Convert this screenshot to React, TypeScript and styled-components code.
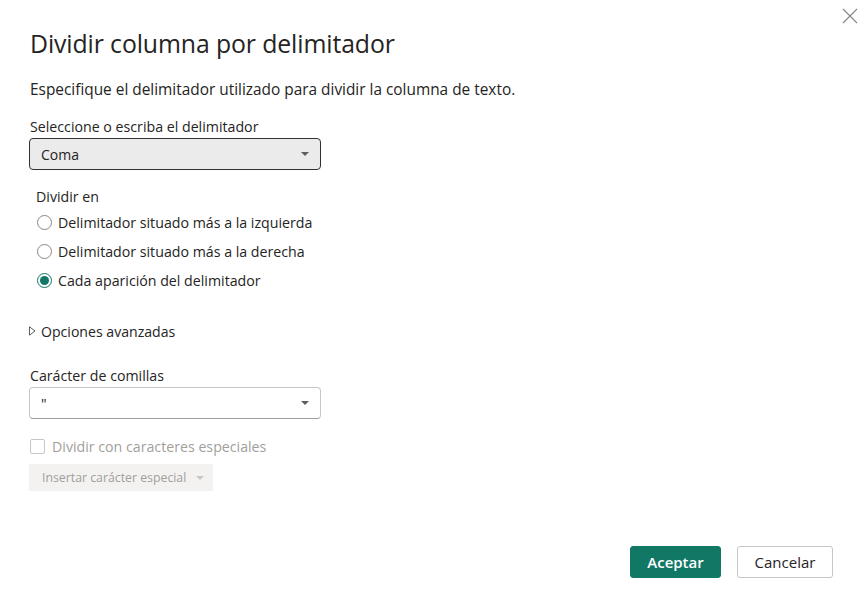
import React from "react";
import styled, { createGlobalStyle } from "styled-components";

const Global = createGlobalStyle`
  html, body { margin: 0; padding: 0; background: #ffffff; }
  body { font-family: "Open Sans", "Noto Sans", sans-serif; color: #252423; }
  * { box-sizing: border-box; }
`;

const Dialog = styled.div`
  position: relative;
  width: 867px;
  height: 605px;
  background: #fff;
  padding: 26px 30px 0 30px;
  display: flex;
  flex-direction: column;
`;

const Close = styled.button`
  position: absolute;
  top: 6px;
  right: 7px;
  width: 20px;
  height: 20px;
  border: none;
  background: transparent;
  padding: 0;
  display: flex;
  align-items: center;
  justify-content: center;
  cursor: pointer;
`;

const Title = styled.h1`
  margin: 0;
  font-size: 24.8px;
  font-weight: 400;
  line-height: 34px;
  color: #252423;
  letter-spacing: -0.1px;
`;

const Description = styled.p`
  margin: 20px 0 0 0;
  font-size: 15.4px;
  line-height: 20px;
  color: #252423;
`;

const Label = styled.div<{ $top: number; $indent?: number }>`
  margin-top: ${(p) => p.$top}px;
  margin-left: ${(p) => p.$indent ?? 0}px;
  font-size: 14.2px;
  line-height: 20px;
  color: #252423;
`;

const Select = styled.div<{ $filled?: boolean }>`
  margin-top: 1px;
  margin-left: -1px;
  width: 292px;
  height: 32px;
  flex-shrink: 0;
  border-radius: 4px;
  border: 1px solid ${(p) => (p.$filled ? "#323130" : "#c8c6c4")};
  border-bottom-color: ${(p) => (p.$filled ? "#323130" : "#a19f9d")};
  background: ${(p) => (p.$filled ? "#ebebeb" : "#ffffff")};
  display: flex;
  align-items: center;
  justify-content: space-between;
  padding: 0 11px 0 11px;
  font-size: 14px;
  color: #252423;
`;

const Caret = styled.span<{ $color?: string }>`
  width: 0;
  height: 0;
  border-left: 4px solid transparent;
  border-right: 4px solid transparent;
  border-top: 4px solid ${(p) => p.$color ?? "#605e5c"};
`;

const RadioGroup = styled.div`
  margin-top: 5px;
  margin-left: 7px;
  display: flex;
  flex-direction: column;
  gap: 9px;
`;

const RadioRow = styled.label`
  display: flex;
  align-items: center;
  gap: 6px;
  height: 20px;
  font-size: 14.2px;
  color: #252423;
`;

const RadioCircle = styled.span<{ $checked?: boolean }>`
  width: 15px;
  height: 15px;
  border-radius: 50%;
  border: 1px solid ${(p) => (p.$checked ? "#117865" : "#8a8886")};
  display: flex;
  align-items: center;
  justify-content: center;
  flex-shrink: 0;
  &::after {
    content: "";
    width: 9px;
    height: 9px;
    border-radius: 50%;
    background: ${(p) => (p.$checked ? "#117865" : "transparent")};
  }
`;

const Expander = styled.div`
  margin-top: 31px;
  margin-left: -1px;
  height: 20px;
  display: flex;
  align-items: center;
  gap: 5px;
  font-size: 14.1px;
  color: #252423;
`;

const CheckRow = styled.div`
  margin-top: 17px;
  height: 20px;
  display: flex;
  align-items: center;
  gap: 7px;
  font-size: 14.2px;
  color: #a19f9d;
`;

const CheckBox = styled.span`
  width: 15px;
  height: 15px;
  border: 1px solid #c8c6c4;
  border-radius: 2px;
  background: #fff;
`;

const DisabledButton = styled.div`
  margin-top: 8px;
  margin-left: -1px;
  width: 184px;
  height: 27px;
  background: #f3f2f1;
  display: flex;
  align-items: center;
  gap: 10px;
  padding-left: 13px;
  font-size: 12.3px;
  color: #a19f9d;
`;

const Footer = styled.div`
  margin-top: auto;
  margin-bottom: 27px;
  margin-right: 4px;
  display: flex;
  justify-content: flex-end;
  gap: 16px;
`;

const Button = styled.button<{ $primary?: boolean }>`
  height: 32px;
  min-width: ${(p) => (p.$primary ? 91 : 96)}px;
  border-radius: 3px;
  font-family: inherit;
  font-size: 15px;
  font-weight: ${(p) => (p.$primary ? 600 : 400)};
  padding: 0 14px;
  border: 1px solid ${(p) => (p.$primary ? "#117865" : "#c8c6c4")};
  background: ${(p) => (p.$primary ? "#117865" : "#ffffff")};
  color: ${(p) => (p.$primary ? "#ffffff" : "#252423")};
  cursor: pointer;
`;

export default function App() {
  return (
    <>
      <Global />
      <Dialog>
        <Close aria-label="Cerrar">
          <svg width="16" height="16" viewBox="0 0 16 16">
            <path d="M1 1 L15 15 M15 1 L1 15" stroke="#8a8886" strokeWidth="1.2" fill="none" />
          </svg>
        </Close>
        <Title>Dividir columna por delimitador</Title>
        <Description>Especifique el delimitador utilizado para dividir la columna de texto.</Description>
        <Label $top={17}>Seleccione o escriba el delimitador</Label>
        <Select $filled>
          <span>Coma</span>
          <Caret />
        </Select>
        <Label $top={17} $indent={6}>Dividir en</Label>
        <RadioGroup>
          <RadioRow>
            <RadioCircle />
            Delimitador situado más a la izquierda
          </RadioRow>
          <RadioRow>
            <RadioCircle />
            Delimitador situado más a la derecha
          </RadioRow>
          <RadioRow>
            <RadioCircle $checked />
            Cada aparición del delimitador
          </RadioRow>
        </RadioGroup>
        <Expander>
          <svg width="7" height="10" viewBox="0 0 7 10">
            <path d="M0.5 0.8 L6 5 L0.5 9.2 Z" fill="none" stroke="#605e5c" strokeWidth="1" />
          </svg>
          Opciones avanzadas
        </Expander>
        <Label $top={25}>Carácter de comillas</Label>
        <Select>
          <span>"</span>
          <Caret />
        </Select>
        <CheckRow>
          <CheckBox />
          Dividir con caracteres especiales
        </CheckRow>
        <DisabledButton>
          Insertar carácter especial
          <Caret $color="#c8c6c4" />
        </DisabledButton>
        <Footer>
          <Button $primary>Aceptar</Button>
          <Button>Cancelar</Button>
        </Footer>
      </Dialog>
    </>
  );
}
